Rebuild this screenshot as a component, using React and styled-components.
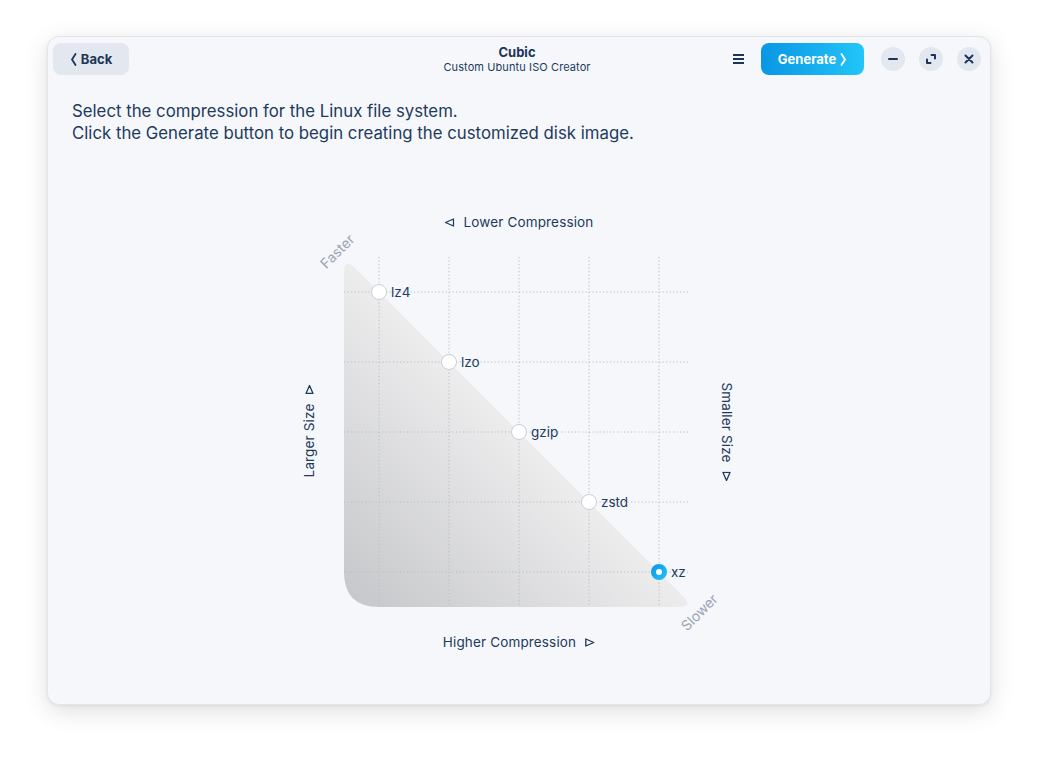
import React from 'react';
import styled, { createGlobalStyle } from 'styled-components';

const GlobalStyle = createGlobalStyle`
  html, body {
    margin: 0;
    padding: 0;
    background: #ffffff;
    font-family: Inter, "Noto Sans", sans-serif;
    color: #1e3a5c;
  }
`;

const Page = styled.div`
  padding: 36px 0 0 47px;
  width: 1038px;
  height: 762px;
  box-sizing: border-box;
`;

const Window = styled.div`
  width: 944px;
  height: 669px;
  background: #f5f7fb;
  border-radius: 12px;
  border: 1px solid #e2e6ec;
  box-sizing: border-box;
  box-shadow: 0 6px 24px rgba(0, 0, 0, 0.13), 0 1px 3px rgba(0, 0, 0, 0.07);
  display: flex;
  flex-direction: column;
  overflow: hidden;
`;

const Header = styled.header`
  display: grid;
  grid-template-columns: 1fr auto 1fr;
  align-items: center;
  padding: 5px 9px 5px 5px;
  height: 44px;
  box-sizing: border-box;
`;

const HeaderLeft = styled.div`
  display: flex;
  align-items: center;
`;

const HeaderRight = styled.div`
  display: flex;
  align-items: center;
  justify-content: flex-end;
`;

const Button = styled.button`
  height: 32px;
  border: none;
  border-radius: 8px;
  display: flex;
  align-items: center;
  justify-content: center;
  gap: 4px;
  font-family: Inter, sans-serif;
  font-size: 13px;
  font-weight: 700;
  cursor: pointer;
  padding: 0;
  width: ${p => p.$width}px;
  background: ${p => p.$primary ? 'linear-gradient(90deg, #0a96e4 0%, #22c5f9 100%)' : '#e3e7ef'};
  color: ${p => p.$primary ? '#ffffff' : '#1c3558'};
`;

const TitleBlock = styled.div`
  text-align: center;
  line-height: 1;
  margin-top: 0;
`;

const Title = styled.div`
  font-size: 13px;
  font-weight: 700;
  color: #1c3558;
  margin-bottom: 3px;
`;

const Subtitle = styled.div`
  font-size: 11px;
  color: #1e3a5c;
  letter-spacing: 0.1px;
`;

const MenuButton = styled.div`
  width: 12px;
  height: 12px;
  display: flex;
  align-items: center;
  justify-content: center;
  margin-right: 17px;
`;

const Controls = styled.div`
  display: flex;
  gap: 14px;
  margin-left: 17px;
`;

const ControlButton = styled.div`
  width: 24px;
  height: 24px;
  border-radius: 50%;
  background: #e3e7ef;
  display: flex;
  align-items: center;
  justify-content: center;
`;

const Content = styled.div`
  flex: 1;
  display: flex;
  flex-direction: column;
  padding: 19px 24px 0 24px;
`;

const Intro = styled.p`
  margin: 0;
  font-size: 16.8px;
  line-height: 22px;
  color: #1e3a5c;
`;

const ChartWrap = styled.div`
  display: flex;
  justify-content: center;
  margin-top: 61px;
`;

const Chart = styled.div`
  position: relative;
  width: 458px;
  height: 460px;
`;

const ChartSvg = styled.svg`
  position: absolute;
  left: 0;
  top: 0;
`;

const AxisLabel = styled.div`
  position: absolute;
  left: ${p => p.$x}px;
  top: ${p => p.$y}px;
  transform: translate(-50%, -50%) rotate(${p => p.$rotate || 0}deg);
  display: flex;
  align-items: center;
  gap: 9px;
  font-size: 13.5px;
  letter-spacing: 0.15px;
  color: #1e3a5c;
  white-space: nowrap;
`;

const CornerLabel = styled.div`
  position: absolute;
  left: ${p => p.$x}px;
  top: ${p => p.$y}px;
  transform: translate(-50%, -50%) rotate(-45deg);
  font-size: 14px;
  color: #9aa5b5;
  white-space: nowrap;
`;

const Node = styled.div`
  position: absolute;
  left: ${p => p.$x - 8}px;
  top: ${p => p.$y - 8}px;
  display: flex;
  align-items: center;
  gap: 4px;
  font-size: 13.5px;
  color: #1e3a5c;
`;

const Radio = styled.span`
  width: 16px;
  height: 16px;
  border-radius: 50%;
  box-sizing: border-box;
  border: ${p => p.$checked ? 'none' : '1px solid #c8ced8'};
  background: ${p => p.$checked ? 'linear-gradient(135deg, #0a96e4, #22c5f9)' : '#ffffff'};
  display: flex;
  align-items: center;
  justify-content: center;

  &::after {
    content: '';
    display: ${p => p.$checked ? 'block' : 'none'};
    width: 6px;
    height: 6px;
    border-radius: 50%;
    background: #ffffff;
  }
`;

const Tri = ({ dir }) => {
  const paths = {
    left: 'M9 1 L1 4.5 L9 8 Z',
    right: 'M1 1 L9 4.5 L1 8 Z',
  };
  return (
    <svg width="10" height="9" viewBox="0 0 10 9">
      <path d={paths[dir]} fill="none" stroke="#1e3a5c" strokeWidth="1.3" strokeLinejoin="round" />
    </svg>
  );
};

const grid = [89, 159, 229, 299, 369];

const nodes = [
  { label: 'lz4', x: 89, y: 87 },
  { label: 'lzo', x: 159, y: 157 },
  { label: 'gzip', x: 229, y: 227 },
  { label: 'zstd', x: 299, y: 297 },
  { label: 'xz', x: 369, y: 367, checked: true },
];

function App() {
  return (
    <Page>
      <GlobalStyle />
      <Window>
        <Header>
          <HeaderLeft>
            <Button $width={76}>
              <svg width="7" height="13" viewBox="0 0 7 13">
                <path d="M5.5 1 L2 6.5 L5.5 12" fill="none" stroke="#1c3558" strokeWidth="1.8" strokeLinecap="round" strokeLinejoin="round" />
              </svg>
              Back
            </Button>
          </HeaderLeft>
          <TitleBlock>
            <Title>Cubic</Title>
            <Subtitle>Custom Ubuntu ISO Creator</Subtitle>
          </TitleBlock>
          <HeaderRight>
            <MenuButton>
              <svg width="11" height="10" viewBox="0 0 11 10">
                <path d="M0 1 H11 M0 5 H11 M0 9 H11" stroke="#1c3558" strokeWidth="2" />
              </svg>
            </MenuButton>
            <Button $primary $width={103}>
              Generate
              <svg width="7" height="13" viewBox="0 0 7 13">
                <path d="M1.5 1 L5 6.5 L1.5 12" fill="none" stroke="#ffffff" strokeWidth="1.8" strokeLinecap="round" strokeLinejoin="round" />
              </svg>
            </Button>
            <Controls>
              <ControlButton>
                <svg width="10" height="10" viewBox="0 0 10 10">
                  <path d="M1 5 H9" stroke="#1c3558" strokeWidth="2" strokeLinecap="round" />
                </svg>
              </ControlButton>
              <ControlButton>
                <svg width="10" height="10" viewBox="0 0 10 10">
                  <path d="M5.5 1 H9 V4.5 M4.5 9 H1 V5.5" fill="none" stroke="#1c3558" strokeWidth="2" strokeLinecap="round" strokeLinejoin="round" />
                </svg>
              </ControlButton>
              <ControlButton>
                <svg width="10" height="10" viewBox="0 0 10 10">
                  <path d="M1.5 1.5 L8.5 8.5 M8.5 1.5 L1.5 8.5" stroke="#1c3558" strokeWidth="2" strokeLinecap="round" />
                </svg>
              </ControlButton>
            </Controls>
          </HeaderRight>
        </Header>
        <Content>
          <Intro>
            Select the compression for the Linux file system.<br />
            Click the Generate button to begin creating the customized disk image.
          </Intro>
          <ChartWrap>
            <Chart>
              <ChartSvg width="458" height="460" viewBox="0 0 458 460">
                <defs>
                  <linearGradient id="tri" x1="0" y1="1" x2="1" y2="0">
                    <stop offset="0" stopColor="#c5c6c9" />
                    <stop offset="0.5" stopColor="#ececed" />
                    <stop offset="1" stopColor="#f6f6f6" />
                  </linearGradient>
                </defs>
                <path
                  d="M54 68 Q54 52 65.3 63.3 L392.7 390.7 Q404 402 388 402 L89 402 Q54 402 54 367 Z"
                  fill="url(#tri)"
                />
                {grid.map(v => (
                  <g key={v} stroke="#b6bcc6" strokeWidth="1" strokeDasharray="1.2 2.3">
                    <line x1={v} y1="52" x2={v} y2="402" />
                    <line x1="54" y1={v - 2} x2="400" y2={v - 2} />
                  </g>
                ))}
              </ChartSvg>

              <AxisLabel $x={229} $y={17}>
                <Tri dir="left" />
                Lower Compression
              </AxisLabel>
              <AxisLabel $x={229} $y={437}>
                Higher Compression
                <Tri dir="right" />
              </AxisLabel>
              <AxisLabel $x={19} $y={226} $rotate={-90}>
                Larger Size
                <Tri dir="right" />
              </AxisLabel>
              <AxisLabel $x={437} $y={227} $rotate={90}>
                Smaller Size
                <Tri dir="right" />
              </AxisLabel>
              <CornerLabel $x={47} $y={46}>Faster</CornerLabel>
              <CornerLabel $x={409} $y={407}>Slower</CornerLabel>

              {nodes.map(n => (
                <Node key={n.label} $x={n.x} $y={n.y}>
                  <Radio $checked={n.checked} />
                  {n.label}
                </Node>
              ))}
            </Chart>
          </ChartWrap>
        </Content>
      </Window>
    </Page>
  );
}

export default App;
